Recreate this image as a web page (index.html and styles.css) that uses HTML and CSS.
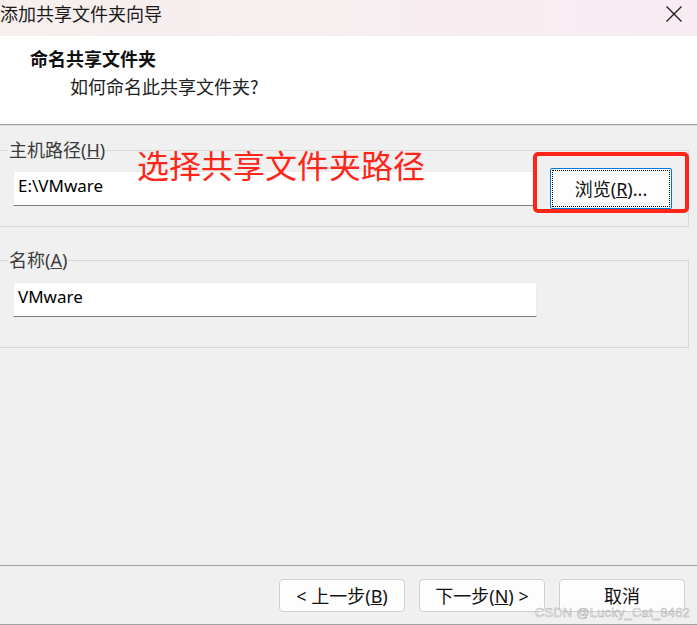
FILE: index.html
```html
<!DOCTYPE html>
<html lang="zh-CN">
<head>
<meta charset="utf-8">
<title>添加共享文件夹向导</title>
<link rel="stylesheet" href="styles.css">
</head>
<body>
<div class="window">
  <div class="titlebar">
    <span class="title">添加共享文件夹向导</span>
    <span class="close" aria-label="关闭">
      <svg width="16" height="16" viewBox="0 0 16 16"><path d="M0.5 0.5 L15.5 15.5 M15.5 0.5 L0.5 15.5" stroke="#1c1c1c" stroke-width="1.3" fill="none"/></svg>
    </span>
  </div>
  <div class="header">
    <div class="h-title">命名共享文件夹</div>
    <div class="h-sub">如何命名此共享文件夹?</div>
  </div>
  <div class="content">
    <fieldset class="group group-path">
      <legend>主机路径(<u>H</u>)</legend>
      <div class="row">
        <div class="input input-path">E:\VMware</div>
        <div class="btn btn-browse">浏览(<u>R</u>)...</div>
      </div>
      <div class="annot-text">选择共享文件夹路径</div>
      <div class="annot-box"></div>
    </fieldset>
    <fieldset class="group group-name">
      <legend>名称(<u>A</u>)</legend>
      <div class="row">
        <div class="input input-name">VMware</div>
      </div>
    </fieldset>
  </div>
  <div class="footer">
    <div class="btn btn-foot">&lt; 上一步(<u>B</u>)</div>
    <div class="btn btn-foot">下一步(<u>N</u>) &gt;</div>
    <div class="btn btn-foot"><span class="btn-label">取消</span></div>
    <div class="watermark">CSDN @Lucky_Cat_8462</div>
  </div>
</div>
</body>
</html>
```
FILE: styles.css
```css
html, body {
  margin: 0;
  padding: 0;
}
body {
  width: 697px;
  height: 625px;
  overflow: hidden;
  background: #f0f0f0;
  font-family: "Noto Sans", "Noto Sans CJK SC", sans-serif;
  color: #111;
}
.window {
  display: flex;
  flex-direction: column;
  height: 625px;
}
.titlebar {
  height: 36px;
  flex: none;
  display: flex;
  justify-content: space-between;
  align-items: flex-start;
  background: linear-gradient(90deg, #f6efed 0%, #f7eef0 50%, #f8ecf3 100%);
}
.title {
  font-family: "Noto Sans CJK SC", sans-serif;
  font-size: 18px;
  line-height: 27px;
  color: #1a1a1a;
}
.close {
  margin: 6px 15px 0 0;
  width: 16px;
  height: 16px;
}
.close svg { display: block; }
.header {
  flex: none;
  height: 89px;
  box-sizing: border-box;
  background: #fff;
  border-bottom: 1px solid #a0a0a0;
  box-shadow: 0 1px 0 #dcdcdc;
  padding-top: 10px;
  font-family: "Noto Sans CJK SC", sans-serif;
}
.h-title {
  font-size: 18px;
  font-weight: 700;
  line-height: 24px;
  margin-left: 30px;
  color: #111;
}
.h-sub {
  font-size: 18px;
  line-height: 24px;
  margin-left: 70px;
  margin-top: 4px;
  color: #222;
}
.content {
  flex: 1;
  display: flex;
  flex-direction: column;
}
.group {
  position: relative;
  margin: 0 8px 0 -1px;
  border: 1px solid #d9d9d9;
  padding: 8px 0 17px 13px;
  min-width: 0;
}
.group legend {
  font-family: "Noto Sans", "Noto Sans CJK SC", sans-serif;
  font-size: 18px;
  line-height: 20px;
  padding: 0 1px;
  margin-left: -5px;
  color: #3a3a3a;
}
.group-path {
  margin-top: 15px;
}
.group-name {
  margin-top: 23px;
  padding-top: 12px;
  padding-bottom: 30px;
}
.row {
  display: flex;
  align-items: center;
}
.input {
  box-sizing: border-box;
  height: 35px;
  background: #fff;
  border: 1px solid #ececec;
  border-bottom: 1px solid #7a7a7a;
  font-family: "Noto Sans", sans-serif;
  font-size: 17px;
  line-height: 26px;
  padding: 1px 0 0 4px;
  color: #000;
}
.input-path {
  width: 521px;
}
.input-name {
  width: 524px;
}
.btn {
  box-sizing: border-box;
  background: #fdfdfd;
  border: 1px solid #d0d0d0;
  border-radius: 4px;
  display: flex;
  align-items: center;
  justify-content: center;
  font-family: "Noto Sans", "Noto Sans CJK SC", sans-serif;
  font-size: 18px;
  line-height: 20px;
  color: #111;
}
.btn-label {
  line-height: 18px;
}
.btn-browse {
  margin-left: 16px;
  width: 122px;
  height: 41px;
  border: 1px solid #0078d7;
  border-radius: 2px;
  outline: 1px dotted #000;
  outline-offset: -3px;
}
.annot-text {
  position: absolute;
  left: 137px;
  top: -16px;
  font-family: "Noto Sans CJK SC", sans-serif;
  font-size: 32px;
  line-height: 40px;
  color: #ff2519;
  white-space: nowrap;
}
.annot-box {
  position: absolute;
  left: 533px;
  top: -8px;
  width: 156px;
  height: 61px;
  box-sizing: border-box;
  border: 4px solid #ff2519;
  border-radius: 5px;
}
.footer {
  position: relative;
  flex: none;
  height: 60px;
  box-sizing: border-box;
  border-top: 1px solid #a0a0a0;
  border-bottom: 1px solid #a0a0a0;
  display: flex;
  justify-content: flex-end;
  align-items: flex-start;
  gap: 14px;
  padding: 13px 12px 0 0;
}
.btn-foot {
  width: 126px;
  height: 33px;
}
.watermark {
  position: absolute;
  right: 7px;
  top: 41px;
  font-family: "Liberation Sans", sans-serif;
  font-size: 13px;
  line-height: 11px;
  color: rgba(255,255,255,0.6);
  -webkit-text-stroke: 0.5px rgba(120,120,120,0.6);
  letter-spacing: 0.2px;
}
```
